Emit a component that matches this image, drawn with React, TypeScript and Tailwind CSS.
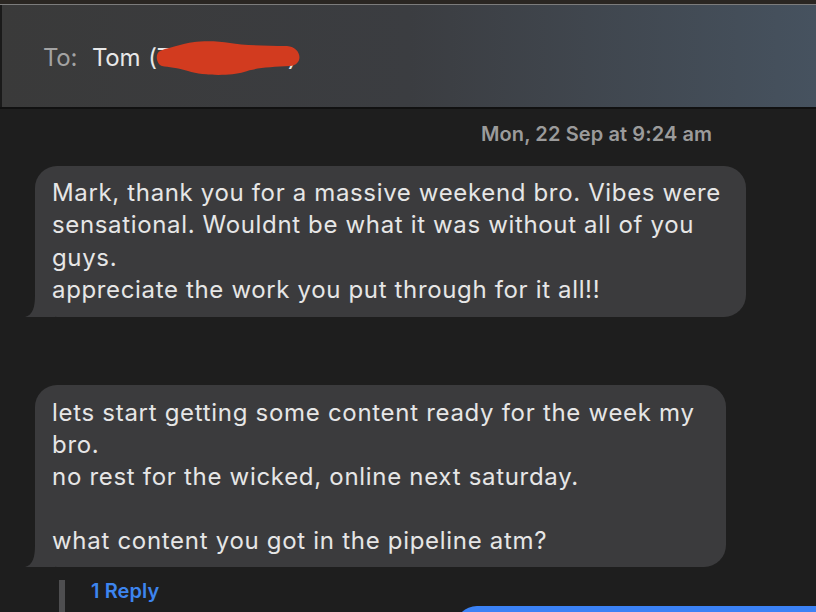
import React from "react";

export default function App() {
  return (
    <div
      className="w-[816px] h-[612px] overflow-hidden bg-[#1e1e1e] flex flex-col"
      style={{ fontFamily: "Inter, 'Noto Sans', sans-serif" }}
    >
      <div className="h-[4px] bg-[#2a2622] shrink-0" />
      <div className="h-[1px] bg-[#7c7c7c] shrink-0" />
      <div className="h-[102px] shrink-0 flex items-center pt-[3px] pl-[41px] border-l-2 border-[#1a1a1a] bg-gradient-to-r from-[#3a3a3a] via-[#3b3d41] to-[#46525f]">
        <div className="flex items-center text-[24px] leading-[28px] tracking-[-0.3px]">
          <span className="text-[#a3a3a3]">To:</span>
          <span className="text-[#e8e8e8] ml-[15px]">Tom</span>
          <span className="relative inline-block ml-[8px]">
            <span className="text-[#e8e8e8]">(T</span>
            <span className="inline-block w-[116px]" />
            <span className="text-[#e8e8e8]">)</span>
            <svg
              className="absolute left-[4px] top-[-5px]"
              width="152"
              height="40"
              viewBox="0 0 152 40"
            >
              <path
                d="M8 12 C 14 9, 22 8, 28 6 C 40 2, 60 1, 78 4 C 90 6, 110 7, 135 7 C 150 8, 152 26, 138 27 C 118 28, 102 29, 92 33 C 78 37, 52 37, 36 32 C 26 29, 16 28, 10 27 C 4 25, 3 14, 8 12 Z"
                fill="#d23b1f"
              />
            </svg>
          </span>
        </div>
      </div>
      <div className="h-[2px] bg-[#111111] shrink-0" />

      <div className="flex flex-col">
        <div className="mt-[13px] pl-[481px] text-[20px] leading-[24px] font-semibold tracking-[0.1px] text-[#9b9b9b]">
          Mon, 22 Sep at 9:24 am
        </div>

        <div className="relative mt-[20px] ml-[35px] w-[711px] rounded-[22px] bg-[#3b3b3d] pl-[17px] pr-[8px] pt-[11px] pb-[11px] text-[24px] leading-[32.3px] tracking-[0.65px] text-[#e6e6e6]">
          <svg
            className="absolute left-[-10px] bottom-0"
            width="34"
            height="22"
            viewBox="0 0 34 22"
          >
            <path d="M10 0 L30 0 L30 22 L0 22 C 8 20, 10 12, 10 0 Z" fill="#3b3b3d" />
          </svg>
          <div className="relative whitespace-nowrap">
            Mark, thank you for a massive weekend bro. Vibes were
            <br />
            sensational. Wouldnt be what it was without all of you
            <br />
            guys.
            <br />
            appreciate the work you put through for it all!!
          </div>
        </div>

        <div className="relative mt-[68px] ml-[35px] w-[691px] rounded-[22px] bg-[#3b3b3d] pl-[17px] pr-[8px] pt-[12px] pb-[10px] text-[24px] leading-[32px] tracking-[0.7px] text-[#e6e6e6]">
          <svg
            className="absolute left-[-10px] bottom-0"
            width="34"
            height="22"
            viewBox="0 0 34 22"
          >
            <path d="M10 0 L30 0 L30 22 L0 22 C 8 20, 10 12, 10 0 Z" fill="#3b3b3d" />
          </svg>
          <div className="relative whitespace-nowrap">
            lets start getting some content ready for the week my
            <br />
            bro.
            <br />
            no rest for the wicked, online next saturday.
            <br />
            <br />
            what content you got in the pipeline atm?
          </div>
        </div>

        <div className="relative flex items-start mt-[13px] h-[40px]">
          <div className="ml-[59px] w-[6px] h-[40px] bg-[#4e4e50] shrink-0" />
          <div className="ml-[26px] mt-[1px] text-[20px] leading-[20px] font-semibold tracking-[0.1px] text-[#3d85ef]">
            1 Reply
          </div>
          <div className="absolute left-[455px] top-[26px] w-[400px] h-[40px] rounded-tl-[22px] bg-[#3b82f6]" />
        </div>
      </div>
    </div>
  );
}
